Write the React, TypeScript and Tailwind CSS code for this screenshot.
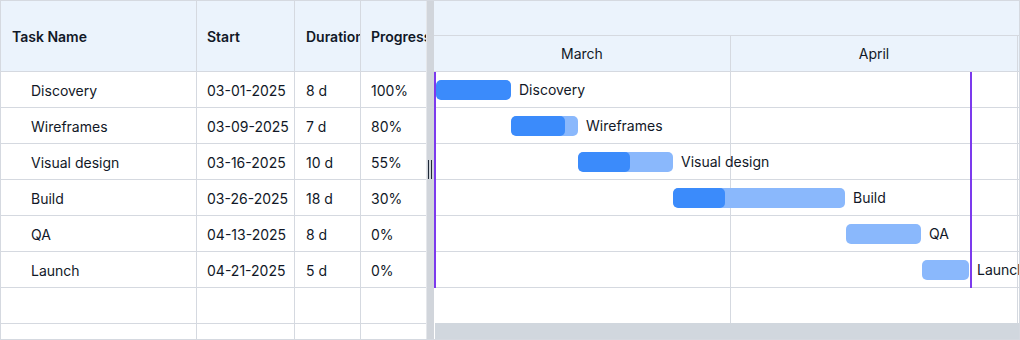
import React from "react";

type Task = {
  name: string;
  start: string;
  duration: string;
  progress: number;
  // pixel offset and width of the bar on the timeline
  left: number;
  width: number;
};

const tasks: Task[] = [
  { name: "Discovery", start: "03-01-2025", duration: "8 d", progress: 100, left: 2, width: 75 },
  { name: "Wireframes", start: "03-09-2025", duration: "7 d", progress: 80, left: 77, width: 67 },
  { name: "Visual design", start: "03-16-2025", duration: "10 d", progress: 55, left: 144, width: 95 },
  { name: "Build", start: "03-26-2025", duration: "18 d", progress: 30, left: 239, width: 172 },
  { name: "QA", start: "04-13-2025", duration: "8 d", progress: 0, left: 412, width: 75 },
  { name: "Launch", start: "04-21-2025", duration: "5 d", progress: 0, left: 488, width: 47 },
];

const emptyRows = 2;

const GridRow = ({ task }: { task?: Task }) => (
  <div className="flex h-[36px] shrink-0 border-b border-[#d5d9e0] text-[14px] text-[#111827]">
    <div className="flex w-[196px] shrink-0 items-center border-r border-[#d5d9e0] pt-[2px] pl-[30px]">
      {task?.name}
    </div>
    <div className="flex w-[98px] shrink-0 items-center border-r border-[#d5d9e0] pt-[2px] pl-[10px]">
      {task?.start}
    </div>
    <div className="flex w-[66px] shrink-0 items-center border-r border-[#d5d9e0] pt-[2px] pl-[11px]">
      {task?.duration}
    </div>
    <div className="flex w-[100px] shrink-0 items-center pt-[2px] pl-[10px]">
      {task ? `${task.progress}%` : ""}
    </div>
  </div>
);

const ChartRow = ({ task, last }: { task?: Task; last?: boolean }) => (
  <div
    className={
      last
        ? "relative flex h-[35px] shrink-0"
        : "relative flex h-[36px] shrink-0 border-b border-[#d5d9e0]"
    }
  >
    <div className="w-[297px] shrink-0 border-r border-[#d5d9e0]" />
    <div className="w-[287px] shrink-0 border-r border-[#d5d9e0]" />
    {task && (
      <>
        <div
          className="absolute top-[8px] h-[20px] overflow-hidden rounded-[5px] bg-[#8ab8fc]"
          style={{ left: task.left, width: task.width }}
        >
          {task.progress > 0 && (
            <div
              className="h-full rounded-[5px] bg-[#3b8bfb]"
              style={{ width: Math.round((task.width * task.progress) / 100) }}
            />
          )}
        </div>
        <div
          className="absolute top-0 flex h-[35px] items-center whitespace-nowrap text-[14px] text-[#111827]"
          style={{ left: task.left + task.width + 8 }}
        >
          {task.name}
        </div>
      </>
    )}
  </div>
);

export default function App() {
  return (
    <div
      className="flex h-[340px] w-[1020px] overflow-hidden border border-[#d5d9e0] bg-white"
      style={{ fontFamily: "Inter, 'Noto Sans', sans-serif" }}
    >
      {/* task grid */}
      <div className="flex w-[425px] shrink-0 flex-col overflow-hidden">
        <div className="flex h-[71px] shrink-0 border-b border-[#d5d9e0] bg-[#ebf3fc] text-[14px] font-semibold text-[#111827]">
          <div className="flex w-[196px] shrink-0 items-center border-r border-[#d5d9e0] pl-[11px]">
            Task Name
          </div>
          <div className="flex w-[98px] shrink-0 items-center border-r border-[#d5d9e0] pl-[10px]">
            Start
          </div>
          <div className="flex w-[66px] shrink-0 items-center overflow-hidden whitespace-nowrap border-r border-[#d5d9e0] pl-[11px]">
            Duration
          </div>
          <div className="flex w-[100px] shrink-0 items-center whitespace-nowrap pl-[10px]">
            Progress
          </div>
        </div>
        {tasks.map((t) => (
          <GridRow key={t.name} task={t} />
        ))}
        {Array.from({ length: emptyRows }).map((_, i) => (
          <GridRow key={i} />
        ))}
      </div>

      {/* splitter */}
      <div className="flex w-[8px] shrink-0 items-start border-l border-[#e5e7eb] bg-[#d1d5db]">
        <div className="mt-[159px] ml-[1px] flex gap-[2px]">
          <div className="h-[19px] w-px bg-[#1f2937]" />
          <div className="h-[19px] w-px bg-[#1f2937]" />
        </div>
      </div>

      {/* timeline */}
      <div className="flex w-[585px] shrink-0 flex-col overflow-hidden">
        <div className="h-[35px] shrink-0 border-b border-[#d5d9e0] bg-[#ebf3fc]" />
        <div className="flex h-[36px] shrink-0 border-b border-[#d5d9e0] bg-[#ebf3fc] text-[14px] text-[#111827]">
          <div className="flex w-[297px] shrink-0 items-center justify-center border-r border-[#d5d9e0]">
            March
          </div>
          <div className="flex w-[287px] shrink-0 items-center justify-center border-r border-[#d5d9e0]">
            April
          </div>
        </div>
        <div className="relative flex flex-col">
          {tasks.map((t) => (
            <ChartRow key={t.name} task={t} />
          ))}
          <ChartRow last />
          <div className="absolute left-0 top-0 h-[216px] w-[2px] bg-[#7c3aed]" />
          <div className="absolute left-[536px] top-0 h-[216px] w-[2px] bg-[#7c3aed]" />
        </div>
        <div className="ml-[1px] h-[16px] shrink-0 bg-[#d1d7de]" />
      </div>
    </div>
  );
}
